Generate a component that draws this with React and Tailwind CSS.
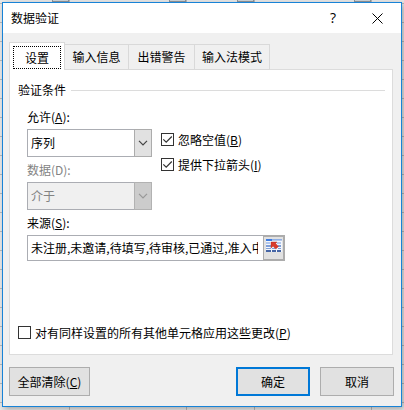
import { useState } from "react";

const TABS = [
  { id: "settings", label: "设置", width: "w-14" },
  { id: "input", label: "输入信息", width: "w-16" },
  { id: "error", label: "出错警告", width: "w-[66px]" },
  { id: "ime", label: "输入法模式", width: "w-[75px]" },
];

function Label({ text, hotkey, colon }) {
  return (
    <>
      {text}({hotkey && <span className="underline underline-offset-1">{hotkey}</span>}){colon && ":"}
    </>
  );
}

function Select({ id, options, disabled }) {
  return (
    <div className="relative h-7 w-[125px]">
      <select
        id={id}
        disabled={disabled}
        className="h-7 w-full appearance-none border border-[#abadb3] bg-white pr-5 pl-[3px] text-black opacity-100 outline-none disabled:bg-[#f0f0f0] disabled:text-[#838383]"
      >
        {options.map((option) => (
          <option key={option}>{option}</option>
        ))}
      </select>
      <span
        className={
          disabled
            ? "pointer-events-none absolute top-0 right-0 flex h-7 w-[18px] items-center justify-center border border-[#b2b2b2] bg-[#cccccc] text-[#989898]"
            : "pointer-events-none absolute top-0 right-0 flex h-7 w-[18px] items-center justify-center border border-[#acacac] bg-[#e1e1e1] text-[#444444]"
        }
      >
        <svg width="10" height="6" viewBox="0 0 10 6" fill="none" stroke="currentColor" strokeWidth="1.2">
          <path d="M1 .8l4 4 4-4" />
        </svg>
      </span>
    </div>
  );
}

function Checkbox({ id, defaultChecked, children }) {
  return (
    <label htmlFor={id} className="flex h-[25px] items-center gap-1">
      <span className="relative h-[13px] w-[13px]">
        <input
          id={id}
          type="checkbox"
          defaultChecked={defaultChecked}
          className="peer block h-[13px] w-[13px] appearance-none border border-[#333333] bg-white"
        />
        <svg
          className="pointer-events-none absolute top-0 left-0 hidden peer-checked:block"
          width="13"
          height="13"
          viewBox="0 0 13 13"
          fill="none"
          stroke="#333333"
          strokeWidth="1.2"
        >
          <path d="M2.3 6.3l2.9 2.9 5.6-5.7" />
        </svg>
      </span>
      <span>{children}</span>
    </label>
  );
}

function RangeIcon() {
  return (
    <svg width="16" height="14" viewBox="0 0 16 14" shapeRendering="crispEdges">
      <rect width="16" height="13" fill="#f4f7fc" />
      <rect y="1" width="16" height="1" fill="#b8c8e6" />
      <rect width="6" height="2" fill="#3d7be0" />
      <rect x="6" width="10" height="1" fill="#8eaee4" />
      <path d="M0 3h4v2H0zM11 3h4v2h-4z" fill="#b3c8ec" />
      <path d="M0 6h5v2H0zM12 6h3v2h-3z" fill="#7f9fd8" />
      <path d="M0 9h5v1H0zM6 9h3v1H6zM12 9h3v1h-3z" fill="#7f9fd8" />
      <path d="M0 11h5v2H0zM6 11h4v2H6zM11 11h4v2h-4z" fill="#4565a5" />
      <path
        d="M5 3h6L9.6 4.5l2.9 2.9L9.8 10 7 7.2 5 9z"
        fill="#d93a2b"
        stroke="#a82a22"
        strokeWidth=".4"
        shapeRendering="auto"
      />
    </svg>
  );
}

// Worksheet rows and column edges that show around the dialog
function Sheet() {
  return (
    <div className="absolute inset-0 -z-10 flex bg-[#e9e9e9] bg-[linear-gradient(to_bottom,transparent_18px,#bababa_18px)] bg-[length:100%_19px] bg-[position:0_4px]">
      {["w-[70px]", "w-[117px]", "w-[68px]", "w-[117px]"].map((width, index) => (
        <div key={index} className={`${width} flex justify-end border-r border-[#b6b6b6]`}>
          <span className="h-[2px] w-[17px] border-x border-b border-[#8e9499] bg-[#d0d5d9]" />
        </div>
      ))}
    </div>
  );
}

export default function App() {
  const [tab, setTab] = useState("settings");

  return (
    <div className="relative isolate flex min-h-screen flex-col p-[2px] pb-[3px] font-['Noto_Sans_CJK_SC',sans-serif] text-xs leading-4 text-black">
      <Sheet />
      <section
        role="dialog"
        aria-labelledby="dialog-title"
        className="flex flex-1 flex-col border border-[#1883d7] bg-[#f0f0f0] shadow-[2px_2px_6px_rgba(0,0,0,0.3)]"
      >
        <header className="flex h-[30px] items-center bg-white pr-[18px] pl-2">
          <h1 id="dialog-title" className="flex-1">
            数据验证
          </h1>
          <div className="flex items-center gap-9">
            <button type="button" aria-label="帮助" className="font-['Open_Sans',sans-serif] text-sm leading-4">
              ?
            </button>
            <button type="button" aria-label="关闭">
              <svg width="11" height="11" viewBox="0 0 11 11" fill="none" stroke="#000" strokeWidth="1">
                <path d="M.5.5l10 10M10.5.5l-10 10" />
              </svg>
            </button>
          </div>
        </header>

        <div className="flex flex-1 flex-col pt-[9px] pr-[7px] pb-[10px] pl-[6px]">
          <div role="tablist" className="relative z-10 -mb-px flex items-end">
            {TABS.map((item) => (
              <button
                key={item.id}
                type="button"
                role="tab"
                aria-selected={tab === item.id}
                onClick={() => setTab(item.id)}
                className={
                  tab === item.id
                    ? `${item.width} h-7 border border-b-0 border-[#d9d9d9] bg-white p-[3px] pb-px`
                    : `${item.width} h-[26px] border border-l-0 border-[#d9d9d9] bg-[#f0f0f0]`
                }
              >
                <span
                  className={
                    tab === item.id
                      ? "flex h-full items-center justify-center border border-dotted border-black"
                      : "block"
                  }
                >
                  {item.label}
                </span>
              </button>
            ))}
          </div>

          <div role="tabpanel" className="mr-px flex flex-1 flex-col border border-[#dcdcdc] bg-white px-2 pb-[9px]">
            <h2 className="mt-3 -mr-px flex items-center gap-[5px] pr-0 after:h-px after:flex-1 after:bg-[#dcdcdc]">
              验证条件
            </h2>

            <div className="flex flex-col pt-[11px] pl-[9px]">
              <div className="flex gap-[9px]">
                <div className="flex flex-col">
                  <label htmlFor="allow" className="mb-1">
                    <Label text="允许" hotkey="A" colon />
                  </label>
                  <Select id="allow" options={["序列"]} />
                  <label htmlFor="data" className="mt-[5px] mb-1 text-[#838383]">
                    数据(D):
                  </label>
                  <Select id="data" options={["介于"]} disabled />
                </div>
                <div className="flex flex-col pt-[18px]">
                  <Checkbox id="ignore-blank" defaultChecked>
                    <Label text="忽略空值" hotkey="B" />
                  </Checkbox>
                  <Checkbox id="dropdown" defaultChecked>
                    <Label text="提供下拉箭头" hotkey="I" />
                  </Checkbox>
                </div>
              </div>

              <label htmlFor="source" className="mt-[5px] mb-1">
                <Label text="来源" hotkey="S" colon />
              </label>
              <div className="flex h-[26px] w-[258px]">
                <input
                  id="source"
                  type="text"
                  defaultValue="未注册,未邀请,待填写,待审核,已通过,准入中"
                  className="min-w-0 flex-1 border border-r-0 border-[#abadb3] bg-white pr-[5px] pl-[3px] outline-none"
                />
                <button
                  type="button"
                  aria-label="选择区域"
                  className="flex w-[22px] items-start justify-center border-2 border-l border-[#acacac] bg-[#e1e1e1] pt-[2px]"
                >
                  <RangeIcon />
                </button>
              </div>
            </div>

            <div className="mt-auto">
              <Checkbox id="apply-all">
                <Label text="对有同样设置的所有其他单元格应用这些更改" hotkey="P" />
              </Checkbox>
            </div>
          </div>

          <footer className="mt-3 flex gap-[10px]">
            <button type="button" className="mr-auto h-[29px] w-[81px] border border-[#adadad] bg-[#e1e1e1]">
              <Label text="全部清除" hotkey="C" />
            </button>
            <button type="button" className="h-[29px] w-[74px] border-2 border-[#0078d7] bg-[#e1e1e1]">
              确定
            </button>
            <button type="button" className="h-[29px] w-[74px] border border-[#adadad] bg-[#e1e1e1]">
              取消
            </button>
          </footer>
        </div>
      </section>
    </div>
  );
}
